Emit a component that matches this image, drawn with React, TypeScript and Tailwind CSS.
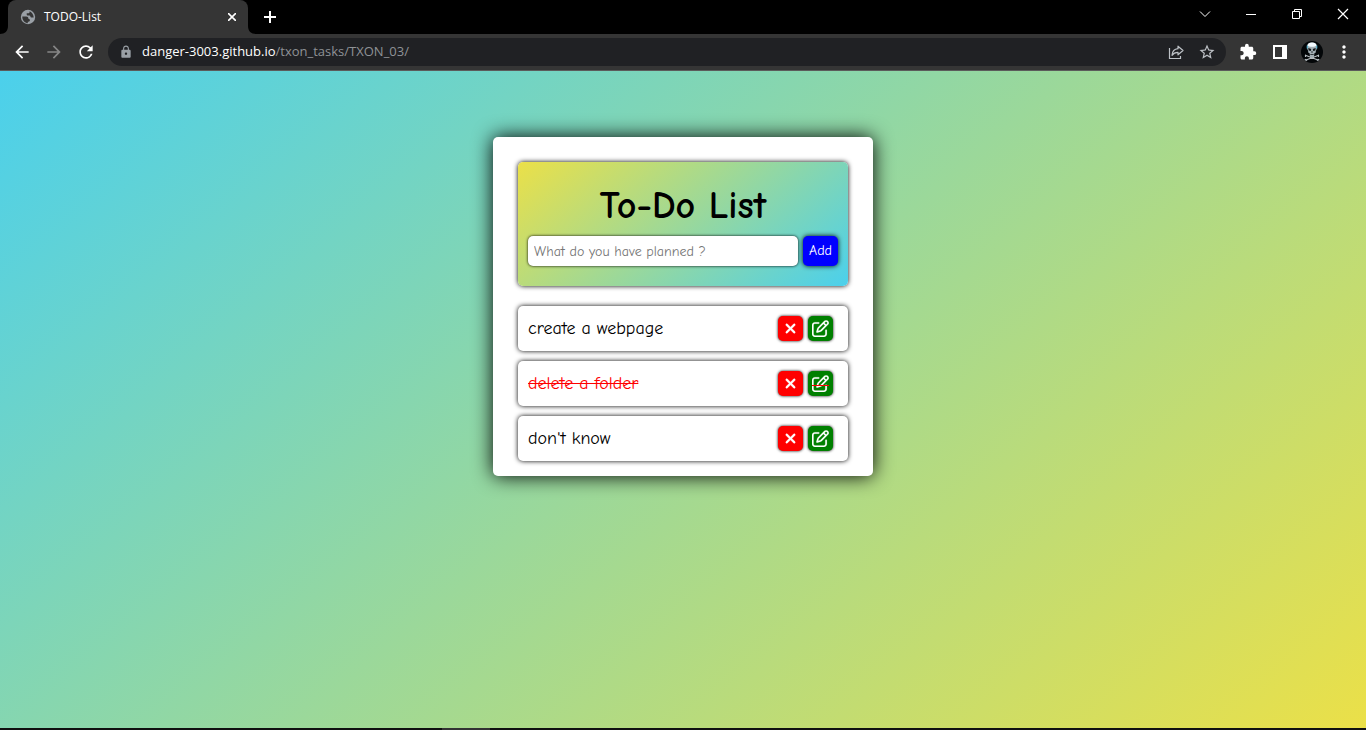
import { useState } from "react";
import { FaRegPenToSquare, FaXmark } from "react-icons/fa6";
import { MdArrowBack, MdArrowForward, MdRefresh, MdLock, MdExtension, MdStarBorder, MdMoreVert } from "react-icons/md";

type Task = { id: number; text: string; done: boolean };

const initialTasks: Task[] = [
  { id: 1, text: "create a webpage", done: false },
  { id: 2, text: "delete a folder", done: true },
  { id: 3, text: "don't know", done: false },
];

function GlobeIcon() {
  return (
    <svg width="16" height="16" viewBox="0 0 16 16" aria-hidden="true">
      <circle cx="8" cy="8" r="7.200" fill="#9aa0a6" />
      <path
        fill="#353535"
        d="M2.300 7.600h3.900c1.500 0 2.200.8 2.200 2.100 1 .1 1.500.6 1.500 1.600 0 .9-.5 1.400-1.500 1.400H7.800v1.500C4.700 14.200 2.300 11.500 2.300 7.600ZM9.600 2.300v.5c0 1-.6 1.500-1.600 1.500H6.700v1.200c0 .6.4.9 1 .9h1.700c.6 0 .9.400 1 1.200.1.700.6 1 1.300 1h2c-.1-2.900-1.700-5.300-4.100-6.300Z"
      />
    </svg>
  );
}

function ShareIcon() {
  return (
    <svg width="16" height="16" viewBox="0 0 16 16" fill="none" stroke="currentColor" strokeWidth="1.2" aria-hidden="true">
      <path d="M1.500 4v10.500h11V12" />
      <path d="M10 2.200 15 6.500 10 10.800V8.300C7.500 8.300 5.500 9 4 11.300 4.300 7.700 6.500 5 10 4.700Z" strokeLinejoin="round" />
    </svg>
  );
}

function SidePanelIcon() {
  return (
    <svg width="14" height="14" viewBox="0 0 14 14" aria-hidden="true">
      <path fill="currentColor" fillRule="evenodd" d="M0 0h14v14H0ZM2 2v10h7V2Z" />
    </svg>
  );
}

function SkullAvatar() {
  return (
    <svg width="22" height="22" viewBox="0 0 22 22" aria-hidden="true">
      <circle cx="11" cy="11" r="11" fill="#030608" />
      <path d="M5 14.500 17 19M17 14.500 5 19" stroke="#b5bcc0" strokeWidth="1.300" strokeLinecap="round" />
      <path d="M4.500 14.200v1.200M4.200 18.500l1.500.8M17.500 14.200v1.200M17.800 18.500l-1.500.8" stroke="#b5bcc0" strokeWidth="1.200" strokeLinecap="round" />
      <path d="M11 1.500c-3.400 0-5 2-5 4.600 0 1.500.4 2.600 1 3.500l.4 2.200 1.200.5.4 3.500c1.200 1.100 2.800 1.100 4 0l.4-3.500 1.200-.5.4-2.200c.6-.9 1-2 1-3.500 0-2.600-1.600-4.600-5-4.600Z" fill="#a3afb5" />
      <path d="M11 1.500c-2.600 0-4.200 1.200-4.700 3 2 1.700 7.400 1.700 9.400 0-.5-1.800-2.100-3-4.700-3Z" fill="#f3fbff" />
      <path d="M6.200 4.500v3M15.800 4.500v3" stroke="#48b4d8" />
      <path d="m7.300 7 2.900 1-.4 2-2.100-.4ZM14.700 7l-2.900 1 .4 2 2.100-.4ZM11 9.700l.9 1.900h-1.800ZM9.300 13h3.400v.8H9.300Z" fill="#101619" />
    </svg>
  );
}

function WindowControls() {
  return (
    <div className="flex h-[28px] items-center text-white">
      <button type="button" aria-label="Search tabs" className="flex w-[46px] justify-center">
        <svg width="12" height="12" viewBox="0 0 12 12" fill="none" stroke="currentColor"><path d="m1 3.500 5 5 5-5" /></svg>
      </button>
      <button type="button" aria-label="Minimize" className="flex w-[46px] justify-center">
        <svg width="10" height="10" viewBox="0 0 10 10"><path d="M0 5h10v1H0Z" fill="currentColor" /></svg>
      </button>
      <button type="button" aria-label="Restore" className="flex w-[46px] justify-center">
        <svg width="10" height="10" viewBox="0 0 10 10" fill="none" stroke="currentColor"><path d="M.5 2.500h7v7h-7ZM2.500 2.500v-2h7v7h-2" /></svg>
      </button>
      <button type="button" aria-label="Close window" className="flex w-[46px] justify-center">
        <svg width="12" height="12" viewBox="0 0 12 12" stroke="currentColor" strokeWidth="1.200"><path d="m1 1 10 10M11 1 1 11" /></svg>
      </button>
    </div>
  );
}

function TabStrip() {
  return (
    <div className="flex h-[34px] justify-between bg-black">
      <div className="flex">
        <svg className="self-end" width="8" height="8" viewBox="0 0 8 8" aria-hidden="true"><path d="M8 0v8H0c5 0 8-3 8-8Z" fill="#353535" /></svg>
        <div className="flex w-[240px] items-center rounded-t-lg bg-[#353535] pr-2 pl-3 text-white">
          <GlobeIcon />
          <span className="ml-2 flex-1 text-xs">TODO-List</span>
          <button type="button" aria-label="Close tab" className="flex size-4 items-center justify-center">
            <svg width="8" height="8" viewBox="0 0 8 8" stroke="currentColor" strokeWidth="1.600"><path d="m0 0 8 8M8 0 0 8" /></svg>
          </button>
        </div>
        <svg className="self-end" width="8" height="8" viewBox="0 0 8 8" aria-hidden="true"><path d="M0 0v8h8C3 8 0 5 0 0Z" fill="#353535" /></svg>
        <button type="button" aria-label="New tab" className="flex w-7 items-center justify-center text-white">
          <svg width="12" height="12" viewBox="0 0 12 12"><path d="M5 0h2v5h5v2H7v5H5V7H0V5h5Z" fill="currentColor" /></svg>
        </button>
      </div>
      <WindowControls />
    </div>
  );
}

function Toolbar() {
  return (
    <div className="flex h-[37px] items-center border-b border-[#5b5b5b] bg-[#353535] px-3 text-white">
      <div className="flex w-24 gap-3">
        <button type="button" aria-label="Back"><MdArrowBack size={20} /></button>
        <button type="button" aria-label="Forward" className="text-[#868686]"><MdArrowForward size={20} /></button>
        <button type="button" aria-label="Reload"><MdRefresh size={20} /></button>
      </div>
      <div className="flex h-7 flex-1 items-center rounded-full bg-[#202124] px-[10px]">
        <MdLock size={14} className="mx-px text-[#9aa0a6]" />
        <div className="ml-2 flex-1 text-[13px] text-[#8f9296]"><span className="text-white">danger-3003.github.io</span>/txon_tasks/TXON_03/</div>
        <div className="flex items-center gap-[14px] text-[#bdc1c6]">
          <button type="button" aria-label="Share"><ShareIcon /></button>
          <button type="button" aria-label="Bookmark"><MdStarBorder size={18} /></button>
        </div>
      </div>
      <div className="ml-3 flex items-center">
        <button type="button" aria-label="Extensions" className="mr-4 ml-px"><MdExtension size={18} /></button>
        <button type="button" aria-label="Side panel" className="mr-[14px]"><SidePanelIcon /></button>
        <button type="button" aria-label="Profile" className="mr-[11px]"><SkullAvatar /></button>
        <button type="button" aria-label="Menu"><MdMoreVert size={20} /></button>
      </div>
    </div>
  );
}

export default function App() {
  const [tasks, setTasks] = useState(initialTasks);
  const [draft, setDraft] = useState("");

  const add = () => {
    if (!draft.trim()) return;
    setTasks([...tasks, { id: Date.now(), text: draft.trim(), done: false }]);
    setDraft("");
  };
  const toggle = (id: number) => setTasks(tasks.map((t) => (t.id === id ? { ...t, done: !t.done } : t)));

  return (
    <div className="flex min-h-screen flex-col font-['Open_Sans','Noto_Sans',sans-serif]">
      <header>
        <TabStrip />
        <Toolbar />
      </header>
      <main className="flex flex-1 items-start justify-center bg-[linear-gradient(140deg,#4bd0ec,#ebe048)] px-4 pt-[66px] font-['Comic_Sans_MS','Comic_Neue','Open_Sans',sans-serif] text-black">
        <section className="w-full max-w-[380px] rounded-[5px] bg-white px-[25px] pt-[25px] pb-[15px] shadow-[0_0_20px_black]">
          <form
            className="rounded-[5px] bg-[linear-gradient(140deg,#ebe048,#4bd0ec)] px-[10px] pt-5 pb-5 shadow-[0_0_5px_black]"
            onSubmit={(e) => { e.preventDefault(); add(); }}
          >
            <h1 className="mb-[6px] text-center text-[38px] leading-[48px] font-bold">To-Do List</h1>
            <div className="flex gap-[5px]">
              <input
                aria-label="New task"
                value={draft}
                onChange={(e) => setDraft(e.target.value)}
                placeholder="What do you have planned ?"
                className="h-[30px] min-w-0 flex-1 rounded-[5px] bg-white px-[6px] text-sm shadow-[0_0_3px_black] outline-none placeholder:text-[#757575]"
              />
              <button type="submit" className="h-[30px] w-[35px] rounded-[5px] bg-[#0000ff] text-sm text-white shadow-[0_0_5px_black]">Add</button>
            </div>
          </form>
          <ul className="mt-5 flex flex-col gap-[10px]">
            {tasks.map((task) => (
              <li key={task.id} className="flex h-[45px] items-center rounded-[5px] bg-white pr-[15px] pl-[10px] shadow-[0_0_5px_black]">
                <button type="button" onClick={() => toggle(task.id)} className={task.done ? "flex-1 text-left text-lg text-[#ff0000] line-through" : "flex-1 text-left text-lg"}>
                  {task.text}
                </button>
                <div className="flex gap-[5px] text-white">
                  <button type="button" aria-label={"Delete " + task.text} onClick={() => setTasks(tasks.filter((t) => t.id !== task.id))} className="flex size-[25px] items-center justify-center rounded-[5px] bg-[#ff0000] shadow-[0_0_3px_black]">
                    <FaXmark size={15} stroke="currentColor" strokeWidth={18} />
                  </button>
                  <button type="button" aria-label={"Edit " + task.text} className="relative flex size-[25px] items-center justify-center rounded-[5px] bg-[#008000] shadow-[0_0_3px_black]">
                    <FaRegPenToSquare size={17} stroke="currentColor" strokeWidth={4} />
                    {task.done && <span className="absolute top-[14px] h-px w-[17px] bg-[#ff0000]" />}
                  </button>
                </div>
              </li>
            ))}
          </ul>
        </section>
      </main>
      <footer className="flex h-[2px] bg-[#101010]">
        <div className="ml-[442px] w-12 bg-[#333333]" />
      </footer>
    </div>
  );
}
